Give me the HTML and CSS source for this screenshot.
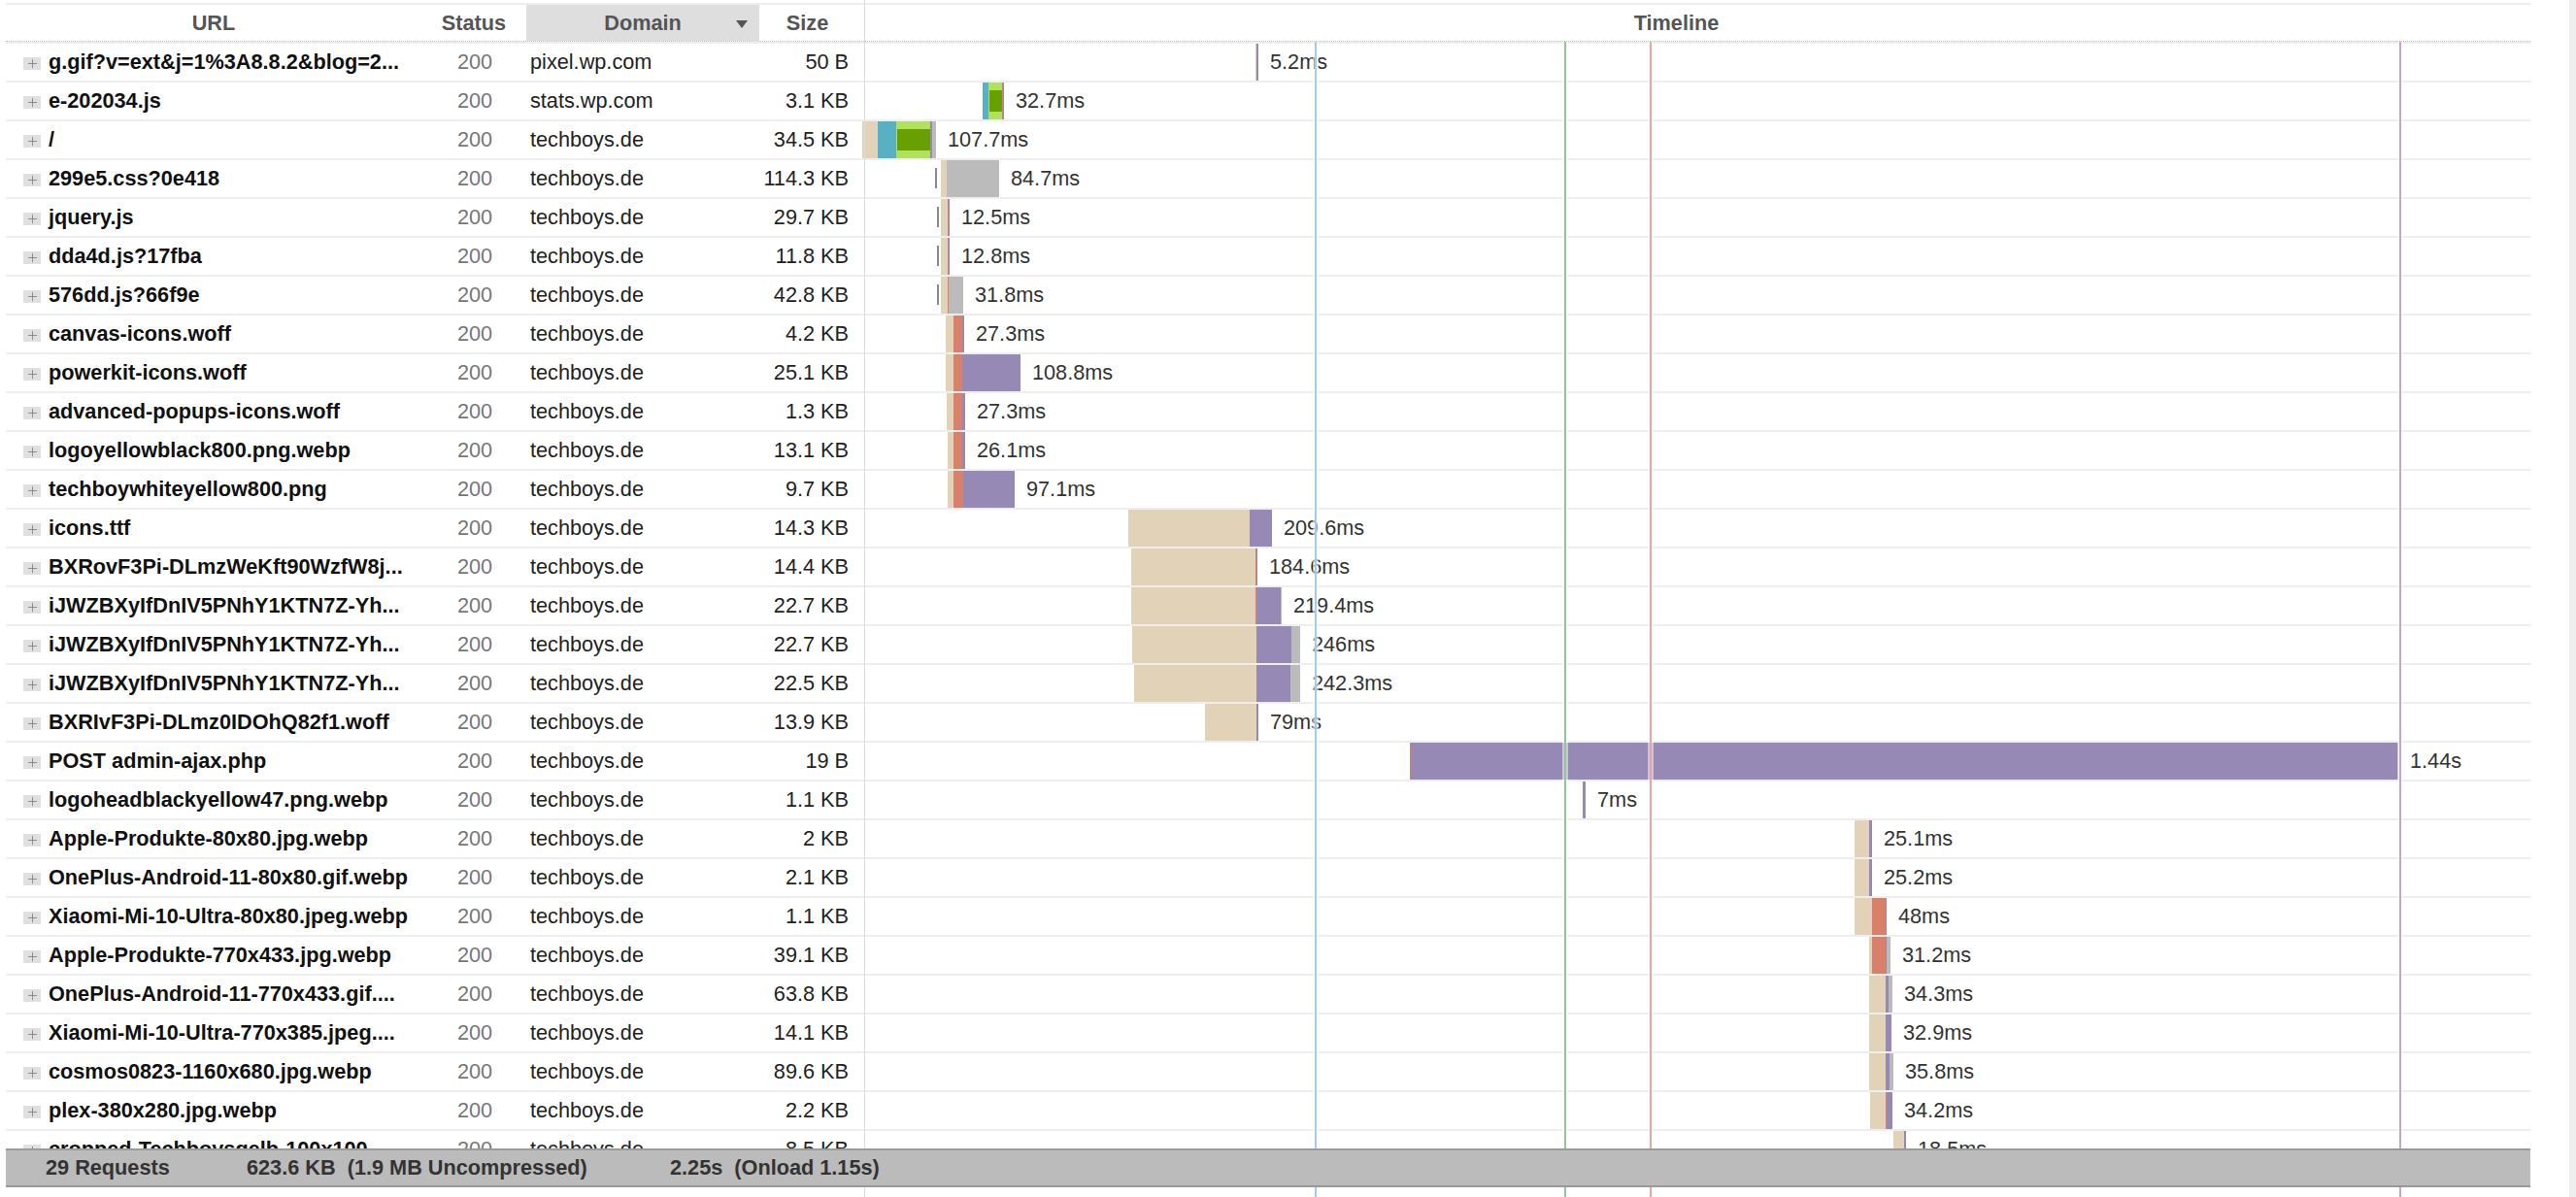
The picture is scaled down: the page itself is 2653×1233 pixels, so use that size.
FILE: index.html
```html
<!DOCTYPE html>
<html>
<head>
<meta charset="utf-8">
<title>Network</title>
<link rel="stylesheet" href="styles.css">
</head>
<body>
<div class="page">
  <div class="net">
    <div class="cols hdr">
      <div class="h-url">URL</div>
      <div class="h-st">Status</div>
      <div class="h-dom">Domain</div>
      <div class="h-sz">Size</div>
      <div class="h-tl">Timeline</div>
    </div>

    <div class="cols row"><div class="url"><i class="exp"></i>g.gif?v=ext&amp;j=1%3A8.8.2&amp;blog=2...</div><div class="st">200</div><div class="dom">pixel.wp.com</div><div class="sz">50 B</div><div class="tl"><div class="bar" style="left:402px"><i class="t" style="width:1px"></i><i class="w" style="width:2px"></i><span class="lbl">5.2ms</span></div></div></div>

    <div class="cols row"><div class="url"><i class="exp"></i>e-202034.js</div><div class="st">200</div><div class="dom">stats.wp.com</div><div class="sz">3.1 KB</div><div class="tl"><div class="bar" style="left:121px"><i class="d" style="width:6px"></i><i class="c" style="width:14px"><b class="ssl"></b></i><i class="o" style="width:1px"></i><i class="w" style="width:1px"></i><span class="lbl">32.7ms</span></div></div></div>

    <div class="cols row"><div class="url"><i class="exp"></i>/</div><div class="st">200</div><div class="dom">techboys.de</div><div class="sz">34.5 KB</div><div class="tl"><div class="bar" style="left:-3px"><i class="t" style="width:16px"></i><i class="d" style="width:19px"></i><i class="c" style="width:35px"><b class="ssl"></b></i><i class="w" style="width:2px"></i><i class="r" style="width:4px"></i><span class="lbl">107.7ms</span></div></div></div>

    <div class="cols row"><div class="url"><i class="exp"></i>299e5.css?0e418</div><div class="st">200</div><div class="dom">techboys.de</div><div class="sz">114.3 KB</div><div class="tl"><i class="tick" style="left:72px"></i><div class="bar" style="left:78px"><i class="t" style="width:6px"></i><i class="r" style="width:54px"></i><span class="lbl">84.7ms</span></div></div></div>

    <div class="cols row"><div class="url"><i class="exp"></i>jquery.js</div><div class="st">200</div><div class="dom">techboys.de</div><div class="sz">29.7 KB</div><div class="tl"><i class="tick" style="left:74px"></i><div class="bar" style="left:78px"><i class="t" style="width:7px"></i><i class="o" style="width:1px"></i><i class="w" style="width:1px"></i><span class="lbl">12.5ms</span></div></div></div>

    <div class="cols row"><div class="url"><i class="exp"></i>dda4d.js?17fba</div><div class="st">200</div><div class="dom">techboys.de</div><div class="sz">11.8 KB</div><div class="tl"><i class="tick" style="left:74px"></i><div class="bar" style="left:78px"><i class="t" style="width:7px"></i><i class="o" style="width:1px"></i><i class="w" style="width:1px"></i><span class="lbl">12.8ms</span></div></div></div>

    <div class="cols row"><div class="url"><i class="exp"></i>576dd.js?66f9e</div><div class="st">200</div><div class="dom">techboys.de</div><div class="sz">42.8 KB</div><div class="tl"><i class="tick" style="left:74px"></i><div class="bar" style="left:78px"><i class="t" style="width:7px"></i><i class="o" style="width:1px"></i><i class="r" style="width:15px"></i><span class="lbl">31.8ms</span></div></div></div>

    <div class="cols row"><div class="url"><i class="exp"></i>canvas-icons.woff</div><div class="st">200</div><div class="dom">techboys.de</div><div class="sz">4.2 KB</div><div class="tl"><div class="bar" style="left:83px"><i class="t" style="width:8px"></i><i class="o" style="width:9px"></i><i class="w" style="width:2px"></i><span class="lbl">27.3ms</span></div></div></div>

    <div class="cols row"><div class="url"><i class="exp"></i>powerkit-icons.woff</div><div class="st">200</div><div class="dom">techboys.de</div><div class="sz">25.1 KB</div><div class="tl"><div class="bar" style="left:83px"><i class="t" style="width:8px"></i><i class="o" style="width:9px"></i><i class="w" style="width:60px"></i><span class="lbl">108.8ms</span></div></div></div>

    <div class="cols row"><div class="url"><i class="exp"></i>advanced-popups-icons.woff</div><div class="st">200</div><div class="dom">techboys.de</div><div class="sz">1.3 KB</div><div class="tl"><div class="bar" style="left:84px"><i class="t" style="width:7px"></i><i class="o" style="width:9px"></i><i class="w" style="width:3px"></i><span class="lbl">27.3ms</span></div></div></div>

    <div class="cols row"><div class="url"><i class="exp"></i>logoyellowblack800.png.webp</div><div class="st">200</div><div class="dom">techboys.de</div><div class="sz">13.1 KB</div><div class="tl"><div class="bar" style="left:85px"><i class="t" style="width:6px"></i><i class="o" style="width:9px"></i><i class="w" style="width:3px"></i><span class="lbl">26.1ms</span></div></div></div>

    <div class="cols row"><div class="url"><i class="exp"></i>techboywhiteyellow800.png</div><div class="st">200</div><div class="dom">techboys.de</div><div class="sz">9.7 KB</div><div class="tl"><div class="bar" style="left:85px"><i class="t" style="width:6px"></i><i class="o" style="width:10px"></i><i class="w" style="width:53px"></i><span class="lbl">97.1ms</span></div></div></div>

    <div class="cols row"><div class="url"><i class="exp"></i>icons.ttf</div><div class="st">200</div><div class="dom">techboys.de</div><div class="sz">14.3 KB</div><div class="tl"><div class="bar" style="left:271px"><i class="t" style="width:125px"></i><i class="w" style="width:23px"></i><span class="lbl">209.6ms</span></div></div></div>

    <div class="cols row"><div class="url"><i class="exp"></i>BXRovF3Pi-DLmzWeKft90WzfW8j...</div><div class="st">200</div><div class="dom">techboys.de</div><div class="sz">14.4 KB</div><div class="tl"><div class="bar" style="left:274px"><i class="t" style="width:128px"></i><i class="o" style="width:1px"></i><i class="w" style="width:1px"></i><span class="lbl">184.6ms</span></div></div></div>

    <div class="cols row"><div class="url"><i class="exp"></i>iJWZBXyIfDnIV5PNhY1KTN7Z-Yh...</div><div class="st">200</div><div class="dom">techboys.de</div><div class="sz">22.7 KB</div><div class="tl"><div class="bar" style="left:274px"><i class="t" style="width:128px"></i><i class="o" style="width:1px"></i><i class="w" style="width:25px"></i><i class="r" style="width:1px"></i><span class="lbl">219.4ms</span></div></div></div>

    <div class="cols row"><div class="url"><i class="exp"></i>iJWZBXyIfDnIV5PNhY1KTN7Z-Yh...</div><div class="st">200</div><div class="dom">techboys.de</div><div class="sz">22.7 KB</div><div class="tl"><div class="bar" style="left:275px"><i class="t" style="width:128px"></i><i class="w" style="width:36px"></i><i class="r" style="width:9px"></i><span class="lbl">246ms</span></div></div></div>

    <div class="cols row"><div class="url"><i class="exp"></i>iJWZBXyIfDnIV5PNhY1KTN7Z-Yh...</div><div class="st">200</div><div class="dom">techboys.de</div><div class="sz">22.5 KB</div><div class="tl"><div class="bar" style="left:277px"><i class="t" style="width:126px"></i><i class="w" style="width:35px"></i><i class="r" style="width:10px"></i><span class="lbl">242.3ms</span></div></div></div>

    <div class="cols row"><div class="url"><i class="exp"></i>BXRIvF3Pi-DLmz0IDOhQ82f1.woff</div><div class="st">200</div><div class="dom">techboys.de</div><div class="sz">13.9 KB</div><div class="tl"><div class="bar" style="left:350px"><i class="t" style="width:53px"></i><i class="w" style="width:2px"></i><span class="lbl">79ms</span></div></div></div>

    <div class="cols row"><div class="url"><i class="exp"></i>POST admin-ajax.php</div><div class="st">200</div><div class="dom">techboys.de</div><div class="sz">19 B</div><div class="tl"><div class="bar" style="left:561px"><i class="o" style="width:1px"></i><i class="w" style="width:1017px"></i><span class="lbl">1.44s</span></div></div></div>

    <div class="cols row"><div class="url"><i class="exp"></i>logoheadblackyellow47.png.webp</div><div class="st">200</div><div class="dom">techboys.de</div><div class="sz">1.1 KB</div><div class="tl"><div class="bar" style="left:739px"><i class="w" style="width:3px"></i><span class="lbl">7ms</span></div></div></div>

    <div class="cols row"><div class="url"><i class="exp"></i>Apple-Produkte-80x80.jpg.webp</div><div class="st">200</div><div class="dom">techboys.de</div><div class="sz">2 KB</div><div class="tl"><div class="bar" style="left:1019px"><i class="t" style="width:15px"></i><i class="w" style="width:3px"></i><span class="lbl">25.1ms</span></div></div></div>

    <div class="cols row"><div class="url"><i class="exp"></i>OnePlus-Android-11-80x80.gif.webp</div><div class="st">200</div><div class="dom">techboys.de</div><div class="sz">2.1 KB</div><div class="tl"><div class="bar" style="left:1019px"><i class="t" style="width:15px"></i><i class="w" style="width:3px"></i><span class="lbl">25.2ms</span></div></div></div>

    <div class="cols row"><div class="url"><i class="exp"></i>Xiaomi-Mi-10-Ultra-80x80.jpeg.webp</div><div class="st">200</div><div class="dom">techboys.de</div><div class="sz">1.1 KB</div><div class="tl"><div class="bar" style="left:1019px"><i class="t" style="width:18px"></i><i class="o" style="width:14px"></i><i class="w" style="width:1px"></i><span class="lbl">48ms</span></div></div></div>

    <div class="cols row"><div class="url"><i class="exp"></i>Apple-Produkte-770x433.jpg.webp</div><div class="st">200</div><div class="dom">techboys.de</div><div class="sz">39.1 KB</div><div class="tl"><div class="bar" style="left:1034px"><i class="t" style="width:3px"></i><i class="o" style="width:14px"></i><i class="w" style="width:1px"></i><i class="r" style="width:4px"></i><span class="lbl">31.2ms</span></div></div></div>

    <div class="cols row"><div class="url"><i class="exp"></i>OnePlus-Android-11-770x433.gif....</div><div class="st">200</div><div class="dom">techboys.de</div><div class="sz">63.8 KB</div><div class="tl"><div class="bar" style="left:1034px"><i class="t" style="width:17px"></i><i class="w" style="width:3px"></i><i class="r" style="width:4px"></i><span class="lbl">34.3ms</span></div></div></div>

    <div class="cols row"><div class="url"><i class="exp"></i>Xiaomi-Mi-10-Ultra-770x385.jpeg....</div><div class="st">200</div><div class="dom">techboys.de</div><div class="sz">14.1 KB</div><div class="tl"><div class="bar" style="left:1034px"><i class="t" style="width:17px"></i><i class="w" style="width:6px"></i><span class="lbl">32.9ms</span></div></div></div>

    <div class="cols row"><div class="url"><i class="exp"></i>cosmos0823-1160x680.jpg.webp</div><div class="st">200</div><div class="dom">techboys.de</div><div class="sz">89.6 KB</div><div class="tl"><div class="bar" style="left:1034px"><i class="t" style="width:17px"></i><i class="w" style="width:4px"></i><i class="r" style="width:4px"></i><span class="lbl">35.8ms</span></div></div></div>

    <div class="cols row"><div class="url"><i class="exp"></i>plex-380x280.jpg.webp</div><div class="st">200</div><div class="dom">techboys.de</div><div class="sz">2.2 KB</div><div class="tl"><div class="bar" style="left:1035px"><i class="t" style="width:16px"></i><i class="o" style="width:1px"></i><i class="w" style="width:6px"></i><span class="lbl">34.2ms</span></div></div></div>

    <div class="cols row"><div class="url"><i class="exp"></i>cropped-Techboysgelb-100x100...</div><div class="st">200</div><div class="dom">techboys.de</div><div class="sz">8.5 KB</div><div class="tl"><div class="bar" style="left:1059px"><i class="t" style="width:11px"></i><i class="w" style="width:2px"></i><span class="lbl">18.5ms</span></div></div></div>
  </div>

  <i class="colline"></i>
  <i class="mark m-dom"></i>
  <i class="mark m-render"></i>
  <i class="mark m-load"></i>
  <i class="mark m-end"></i>

  <div class="foot">
    <span class="f1">29 Requests</span>
    <span class="f2">623.6 KB&nbsp; (1.9 MB Uncompressed)</span>
    <span class="f3">2.25s&nbsp; (Onload 1.15s)</span>
  </div>
  <div class="scroll"></div>
</div>
</body>
</html>
```

FILE: styles.css
```css
* { box-sizing: border-box; }
html, body { margin: 0; padding: 0; background: #fff; }
body {
  font-family: "Liberation Sans", Arial, Helvetica, sans-serif;
  font-size: 21.7px;
  color: #222;
  width: 2653px;
  height: 1233px;
  overflow: hidden;
}
.page {
  position: relative;
  height: 1233px;
  padding: 3px 0 0 6px;
  overflow: hidden;
}
.net {
  width: 2600px;
  border-top: 2px solid #eee;
}
.cols {
  display: grid;
  grid-template-columns: 428px 108px 240px 109px 1715px;
}
.hdr {
  height: 38px;
  border-bottom: 1px dotted #bdbdbd;
  font-weight: bold;
  color: #555;
  line-height: 37px;
}
.hdr > div { text-align: center; white-space: nowrap; }
.h-dom {
  background: #dedede;
  position: relative;
}
.h-dom::after {
  content: "";
  position: absolute;
  right: 12px;
  top: 16px;
  border-left: 6px solid transparent;
  border-right: 6px solid transparent;
  border-top: 8px solid #555;
}
.h-sz { padding-left: 0; padding-right: 10px; }
.h-tl { padding-right: 44px; }

.row {
  height: 40px;
  border-top: 2px solid #eee;
  line-height: 38px;
  white-space: nowrap;
}
.url {
  font-weight: bold;
  color: #111;
  padding-left: 18px;
  display: flex;
  align-items: center;
}
.exp {
  display: block;
  flex: none;
  width: 18px;
  height: 13px;
  margin-right: 8px;
  margin-top: 3px;
  background-color: #e0e0e0;
  background-image:
    linear-gradient(#8c8c8c, #8c8c8c),
    linear-gradient(#8c8c8c, #8c8c8c);
  background-repeat: no-repeat;
  background-size: 9px 1px, 1px 9px;
  background-position: 5px 6px, 9px 2px;
}
.st { text-align: center; color: #777; padding-left: 2px; }
.dom { padding-left: 4px; color: #222; }
.sz { text-align: right; padding-right: 17px; color: #222; }
.tl { position: relative; }

.bar {
  position: absolute;
  top: 0;
  bottom: 0;
  display: flex;
  align-items: stretch;
}
.bar > i { display: block; flex: none; position: relative; }
.t { background: #e1d2b8; }
.d { background: #57b1c2; }
.c { background: #b3e05c; }
.ssl { position: absolute; top: 8px; bottom: 8px; left: 1px; right: 0; background: #67a000; }
.o { background: #d8806a; }
.w { background: #9789b6; }
.r { background: #bbbbbb; }
.lbl {
  margin-left: 12px;
  color: #333;
  line-height: 38px;
}
.tick {
  position: absolute;
  top: 8px;
  bottom: 9px;
  width: 2px;
  background: #8a8a8a;
}

.colline {
  position: absolute;
  left: 890px;
  top: 0;
  bottom: 0;
  width: 1px;
  background: #dcdcdc;
}
.mark {
  position: absolute;
  top: 43px;
  bottom: 0;
  width: 6px;
  border-left: 2px solid rgba(255,255,255,0.5);
  border-right: 2px solid rgba(255,255,255,0.5);
  background-clip: padding-box;
}
.m-dom { left: 1352px; background-color: #a3cbea; }
.m-render { left: 1609px; background-color: #92c992; }
.m-load { left: 1697px; background-color: #f3a2a2; }
.m-end { left: 2469px; background-color: #c9a2c8; }

.foot {
  position: absolute;
  left: 6px;
  top: 1183px;
  width: 2600px;
  height: 40px;
  background: #bbbbbb;
  border-top: 2px solid #999;
  border-bottom: 2px solid #999;
  display: flex;
  align-items: center;
  padding-left: 41px;
  font-weight: bold;
  color: #333;
  white-space: nowrap;
}
.f1 { width: 207px; }
.f2 { width: 436px; }
.scroll {
  position: absolute;
  right: 0;
  top: 0;
  bottom: 0;
  width: 7px;
  background: #eeeeee;
}
```
